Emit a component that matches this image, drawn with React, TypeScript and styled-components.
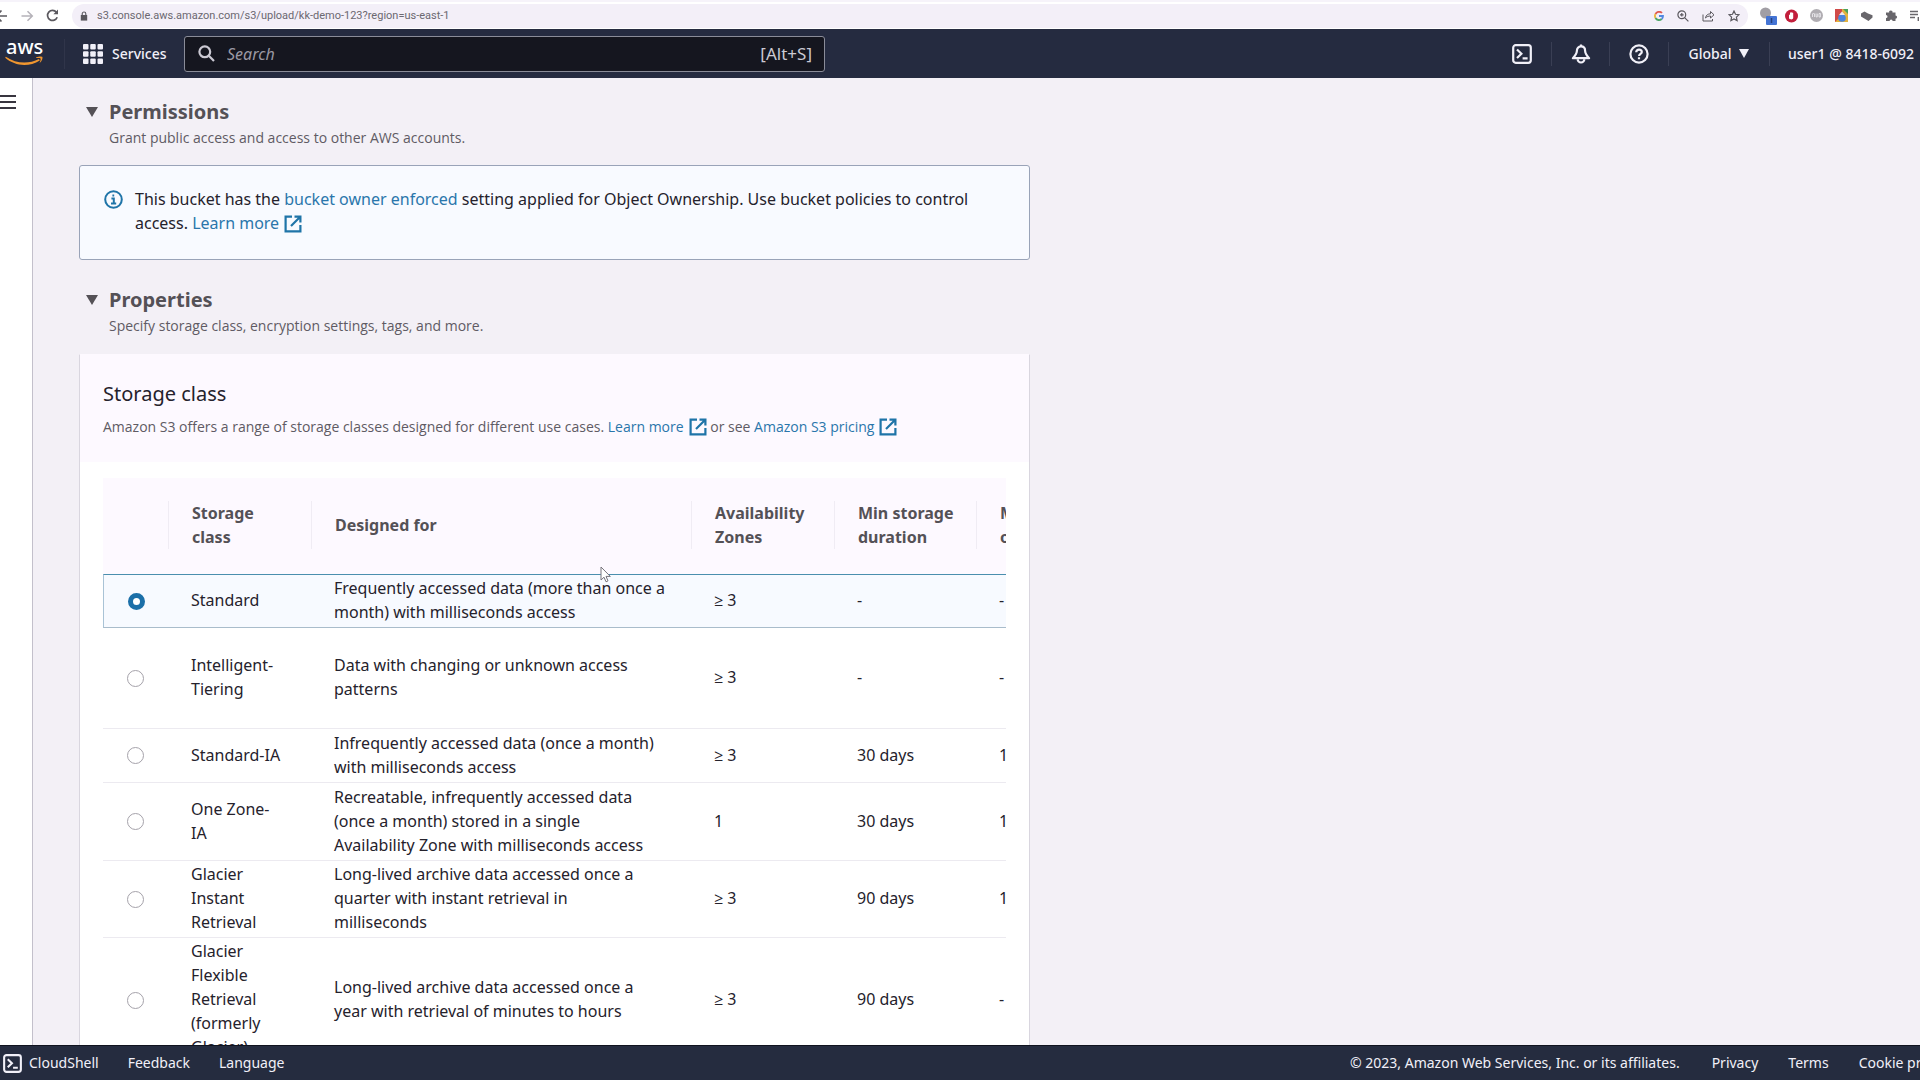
import React, { useState } from 'react';
import styled, { createGlobalStyle } from 'styled-components';

const color = {
  nav: '#252b40',
  navText: '#f1f0f8',
  page: '#f3f0f6',
  heading: '#545156',
  text: '#25222c',
  muted: '#5f5b64',
  link: '#2a76ab',
  icon: '#1f74a8',
  panelHead: '#fdf9ff',
};

const GlobalStyle = createGlobalStyle`
  *, *::before, *::after { box-sizing: border-box; }
  body {
    margin: 0;
    overflow: hidden;
    font-family: 'Noto Sans', 'Open Sans', sans-serif;
    font-size: 16px;
    line-height: 24px;
    color: ${color.text};
  }
  button {
    border: 0;
    padding: 0;
    background: none;
    color: inherit;
    font: inherit;
    cursor: pointer;
  }
  svg { display: block; flex: none; }
`;

const Shell = styled.div`
  display: flex;
  flex-direction: column;
  height: 100vh;
  overflow: hidden;
`;

/* Browser toolbar */

const BrowserBar = styled.div`
  display: flex;
  align-items: center;
  flex: none;
  height: 29px;
  background: #fff;
  border-top: 2px solid #f6f3fa;
  overflow: hidden;
`;

const BrowserButtons = styled.div`
  display: flex;
  align-items: center;
  gap: 12px;
  width: 72px;
  flex: none;
  color: #5a585e;
`;

const AddressBar = styled.label`
  display: flex;
  align-items: center;
  flex: 1;
  height: 24px;
  padding: 0 8px;
  border-radius: 12px;
  background: #f3eff8;
  color: #5a585e;
`;

const AddressInput = styled.input`
  flex: 1;
  margin: 0 0 0 9px;
  padding: 0;
  border: 0;
  outline: 0;
  background: transparent;
  color: #6b6870;
  font: 11px/16px Roboto, sans-serif;
`;

const AddressActions = styled.div`
  display: flex;
  align-items: center;
  gap: 13px;
`;

const Extensions = styled.div`
  display: flex;
  align-items: center;
  gap: 12px;
  width: 172px;
  flex: none;
  padding-left: 12px;
  color: #68666b;
  svg { overflow: visible; }
`;

/* Console navigation */

const NavBar = styled.header`
  display: flex;
  align-items: center;
  flex: none;
  height: 49px;
  background: ${color.nav};
  color: ${color.navText};
  font-size: 14px;
  overflow: hidden;
`;

const LogoLink = styled.a`
  width: 65px;
  padding-left: 5px;
  flex: none;
  border-right: 1px solid #30354a;
`;

const ServicesButton = styled.button`
  display: flex;
  align-items: center;
  gap: 9px;
  width: 119px;
  padding-left: 18px;
  flex: none;
  font-weight: 500;
`;

const SearchBox = styled.label`
  display: flex;
  align-items: center;
  width: 641px;
  height: 36px;
  padding: 0 12px 0 13px;
  border: 1px solid #8a8c98;
  border-radius: 3px;
  background: #15161f;
  color: #cbc9d3;
  font-size: 17px;
`;

const SearchInput = styled.input`
  flex: 1;
  min-width: 0;
  margin-left: 12px;
  padding: 0;
  border: 0;
  outline: 0;
  background: transparent;
  color: #fff;
  font: 16px/24px 'Noto Sans', sans-serif;
  &::placeholder {
    color: #9b99a4;
    font-style: italic;
    opacity: 1;
  }
`;

const NavActions = styled.div`
  display: flex;
  align-items: center;
  margin-left: auto;
`;

const NavItem = styled.button<{ $width: number }>`
  display: flex;
  align-items: center;
  justify-content: center;
  gap: 8px;
  width: ${(p) => p.$width}px;
  height: 24px;
  border-right: 1px solid #3a3f54;
  font-weight: 500;
  white-space: nowrap;
  &:last-child {
    justify-content: flex-start;
    padding-left: 18px;
    border-right: 0;
  }
`;

/* Page body */

const Body = styled.div`
  display: flex;
  flex: 1;
  min-height: 0;
  overflow: hidden;
`;

const SideRail = styled.aside`
  width: 33px;
  flex: none;
  padding-top: 16px;
  background: #fff;
  border-right: 1px solid #c3c0cb;
  button { display: block; }
`;

const Main = styled.main`
  position: relative;
  flex: 1;
  min-width: 0;
  padding: 22px 45px 0 46px;
  background: ${color.page};
`;

const Content = styled.div`
  max-width: 951px;
`;

const SectionHeader = styled.button`
  display: grid;
  grid-template-columns: 30px 1fr;
  row-gap: 4px;
  align-items: center;
  text-align: left;
`;

const Caret = styled.svg`
  margin-left: 7px;
`;

const SectionTitle = styled.span`
  font-size: 20px;
  font-weight: 700;
  line-height: 24px;
  color: ${color.heading};
`;

const SectionText = styled.span`
  grid-column: 2;
  font-family: 'Open Sans', 'Noto Sans', sans-serif;
  font-size: 14px;
  line-height: 20px;
  color: ${color.muted};
`;

const InfoBox = styled.div`
  display: flex;
  gap: 12px;
  margin: 17px 0 28px;
  padding: 21px 24px 24px;
  border: 1px solid #99a3b8;
  border-radius: 3px;
  background: #f8faff;
  & > svg { margin-top: 3px; }
  p { margin: 0; }
`;

const Link = styled.a`
  color: ${color.link};
  text-decoration: none;
  svg {
    display: inline-block;
    margin-left: 5px;
    vertical-align: -4px;
    color: ${color.icon};
  }
`;

const Panel = styled.section`
  margin-top: 18px;
  background: #fff;
  border: 1px solid #d9d6df;
  border-top-color: ${color.panelHead};
`;

const PanelHeader = styled.div`
  padding: 27px 23px 25px;
  background: ${color.panelHead};
`;

const PanelTitle = styled.h2`
  margin: 0 0 11px;
  font-size: 20px;
  font-weight: 400;
  line-height: 24px;
`;

const PanelText = styled.p`
  margin: 0;
  font-family: 'Open Sans', 'Noto Sans', sans-serif;
  font-size: 14px;
  line-height: 20px;
  color: ${color.muted};
`;

const TableScroller = styled.div`
  margin: 16px 23px 0;
  overflow: hidden;
`;

const Table = styled.table`
  width: 1017px;
  table-layout: fixed;
  border-collapse: separate;
  border-spacing: 0;
`;

const HeadCell = styled.th`
  height: 96px;
  padding: 0 0 2px;
  background: ${color.panelHead};
  color: ${color.heading};
  font-weight: 700;
  text-align: left;
  vertical-align: middle;
`;

const HeadLabel = styled.div`
  display: flex;
  align-items: center;
  height: 48px;
  padding: 0 20px 0 23px;
  border-left: 1px solid #f0ecf4;
`;

const Row = styled.tr<{ $selected: boolean; $height: number }>`
  height: ${(p) => p.$height}px;
  td {
    padding: 1px 24px 3px 23px;
    white-space: pre-line;
    vertical-align: middle;
    border-bottom: 1px solid ${(p) => (p.$selected ? '#a9bccb' : '#eceaf0')};
    border-top: ${(p) => (p.$selected ? '1px solid #4a8fae' : '0')};
    background: ${(p) => (p.$selected ? '#f7faff' : '#fff')};
  }
  td:first-child {
    padding: 0;
    border-left: ${(p) => (p.$selected ? '1px solid #a9c3d6' : '0')};
  }
`;

const Radio = styled.input`
  display: block;
  appearance: none;
  width: 17px;
  height: 17px;
  margin: 0 auto;
  border: 1px solid #a5a2aa;
  border-radius: 50%;
  background: #fff;
  &:checked { border: 5px solid #1b6fa8; }
`;

const Pointer = styled.svg`
  position: absolute;
  left: 567px;
  top: 488px;
`;

/* Footer */

const Footer = styled.footer`
  display: flex;
  align-items: center;
  flex: none;
  height: 35px;
  padding-left: 3px;
  border-top: 1px solid #10131f;
  background: #252c3f;
  color: ${color.navText};
  font-size: 14px;
  white-space: nowrap;
  overflow: hidden;
`;

const FooterGroup = styled.div`
  display: flex;
  align-items: center;
  gap: 29px;
`;

const FooterButton = styled.button`
  display: flex;
  align-items: center;
  gap: 7px;
`;

const Legal = styled.div`
  display: flex;
  gap: 30px;
  width: 570px;
  margin-left: auto;
  a { color: inherit; text-decoration: none; }
  span { margin-right: 2px; }
`;

/* Icons */

const ExternalIcon = () => (
  <svg width="18" height="18" viewBox="0 0 18 18" fill="none" stroke="currentColor" strokeWidth="2.2">
    <path d="M8 1.6H1.6v14.8h14.8V10" />
    <path d="M10.5 1.6h5.9v5.9M16 2 7 11" />
  </svg>
);

const InfoIcon = () => (
  <svg width="19" height="19" viewBox="0 0 19 19" fill="none" stroke={color.icon} strokeWidth="2">
    <circle cx="9.5" cy="9.5" r="8.3" />
    <path d="M7.4 8.6h2.4v4.6M7 13.6h5.2M8.4 5.4h1.8" />
  </svg>
);

const TerminalIcon = ({ size = 20 }: { size?: number }) => (
  <svg width={size} height={size} viewBox="0 0 20 20" fill="none" stroke="currentColor" strokeWidth="2.200">
    <rect x="1.200" y="1.200" width="17.600" height="17.600" rx="2.5" />
    <path d="m5 5.5 4.400 4.300L5 14M10.600 14.400h5" />
  </svg>
);

const BellIcon = () => (
  <svg width="20" height="20" viewBox="0 0 20 20" fill="none" stroke="currentColor" strokeWidth="2.200" strokeLinejoin="round">
    <path d="M10 2.400c-2.600 0-4.100 1.900-4.100 4.400 0 2.700-1.300 4.500-4 7.400h16.200c-2.700-2.900-4-4.700-4-7.400 0-2.500-1.500-4.400-4.100-4.400Z" />
    <path d="M10 .4v2M6.700 15.200a3.300 3.300 0 0 0 6.600 0" />
  </svg>
);

const HelpIcon = () => (
  <svg width="20" height="20" viewBox="0 0 20 20" fill="none" stroke="currentColor" strokeWidth="2.200">
    <circle cx="10" cy="10" r="8.600" />
    <path d="M7.200 8.300c0-1.700 1.200-2.700 2.800-2.700s2.800 1 2.800 2.400c0 1.900-2.700 2-2.700 4M10 13.300v1.900" />
  </svg>
);

const GridIcon = () => (
  <svg width="20" height="20" viewBox="0 0 20 20" fill="currentColor">
    {[0, 7.25, 14.5].map((y) => [0, 7.25, 14.5].map((x) => <rect key={`${x}-${y}`} x={x} y={y} width="5.5" height="5.5" rx="1" />))}
  </svg>
);

const SearchIcon = () => (
  <svg width="17" height="17" viewBox="0 0 17 17" fill="none" stroke="currentColor" strokeWidth="2.200">
    <circle cx="6.800" cy="6.800" r="5.400" />
    <path d="m10.800 10.800 5.200 5.200" />
  </svg>
);

const AwsLogo = () => (
  <svg width="40" height="30" viewBox="0 0 40 30" role="img" aria-label="AWS">
    <text x="1" y="15" fill="#fff" fontFamily="Noto Sans, sans-serif" fontSize="20" fontWeight="500">aws</text>
    <path d="M.8 17.800c10.600 7.200 23 7.400 33.200 2.200l.8 1.400C24 28.200 10 27.400.2 18.800Z" fill="#f0962f" />
    <path d="M31 18.400c3-1.200 6-1.200 6.400-.4.500 1-.4 4.300-2.900 6.200.8-2.100 1.500-4 1-4.700-.4-.6-2.400-.6-4.500-.4Z" fill="#f0962f" />
  </svg>
);

const BackIcon = () => (
  <svg width="8" height="14" viewBox="6 0 8 14" fill="none" stroke="currentColor" strokeWidth="1.600">
    <path d="M13 7H2M7.500 1.500 2 7l5.500 5.500" />
  </svg>
);

const ForwardIcon = () => (
  <svg width="14" height="14" viewBox="0 0 14 14" fill="none" stroke="#b5b2b9" strokeWidth="1.500">
    <path d="M1.500 7h11M7.500 2.200 12.300 7l-4.800 4.800" />
  </svg>
);

const ReloadIcon = () => (
  <svg width="13" height="13" viewBox="0 0 13 13" fill="none" stroke="currentColor" strokeWidth="1.700">
    <path d="M11.200 8.200a5 5 0 1 1-.8-5" />
    <path d="M12 .6v4.600H7.400Z" fill="currentColor" stroke="none" />
  </svg>
);

const LockIcon = () => (
  <svg width="8" height="10" viewBox="0 0 8 10" fill="currentColor">
    <path d="M.8 4h6.400v5.600H.8Z" />
    <path d="M2.200 4.500V2.800a1.800 1.800 0 0 1 3.600 0v1.700" fill="none" stroke="currentColor" strokeWidth="1.100" />
  </svg>
);

const GoogleIcon = () => (
  <svg width="10" height="10" viewBox="0 0 10 10" fill="none" strokeWidth="1.800">
    <path d="M8 2A4 4 0 0 0 1.500 3" stroke="#df5a50" />
    <path d="M1.500 3a4 4 0 0 0 0 4" stroke="#ecb53c" />
    <path d="M1.500 7A4 4 0 0 0 7.700 8" stroke="#4ba665" />
    <path d="M7.700 8A4 4 0 0 0 9 5H5" stroke="#5288e0" />
  </svg>
);

const ZoomIcon = () => (
  <svg width="12" height="12" viewBox="0 0 12 12" fill="none" stroke="currentColor" strokeWidth="1.200">
    <circle cx="4.800" cy="4.800" r="3.900" />
    <path d="m7.600 7.600 3.800 3.800M3 4.800h3.600M4.800 3v3.600" />
  </svg>
);

const ShareIcon = () => (
  <svg width="13" height="12" viewBox="0 0 13 12" fill="none" stroke="currentColor" strokeWidth="1">
    <path d="M1 4.500V11h9.500V9" />
    <path d="M3.500 8C4 5 6 3.800 8.500 3.800V1.500L12 4.800 8.500 8V6C6.500 6 5 6.500 3.500 8Z" />
  </svg>
);

const StarIcon = () => (
  <svg width="12" height="12" viewBox="0 0 12 12" fill="none" stroke="currentColor" strokeWidth="1.200">
    <path d="m6 1 1.500 3.300 3.500.4-2.600 2.400.7 3.500L6 8.900l-3.100 1.700.7-3.500L1 4.700l3.500-.4Z" />
  </svg>
);

const ProfileExtIcon = () => (
  <svg width="13" height="18" viewBox="0 0 13 18">
    <circle cx="5.500" cy="6" r="5.500" fill="#a19ea4" />
    <rect x="6" y="9" width="11" height="9" rx="1" fill="#4474d4" />
    <path d="M11.500 11v5" stroke="#24407e" strokeWidth="1.500" />
  </svg>
);

const BlockerIcon = () => (
  <svg width="13" height="14" viewBox="0 0 13 14">
    <circle cx="6.500" cy="7" r="6.500" fill="#c21f3c" />
    <path d="M4 6.200c0-1 1-1 1 0V4c0-.9 1-.9 1 0 0-1 1.200-1 1.200 0 0-.8 1-.7 1 .2V9c0 1.700-3.500 1.900-4.200.2Z" fill="#fff" />
  </svg>
);

const GreyBadgeIcon = () => (
  <svg width="13" height="13" viewBox="0 0 13 13">
    <circle cx="6.500" cy="6.500" r="6.500" fill="#b0adb2" />
    <path d="M2.500 8V5l1-1 1 1v3M6 4.500v3.400h1.300V4.600M9 4.500h1.400V8H9Z" fill="none" stroke="#f3f1f5" strokeWidth=".8" />
  </svg>
);

const MapIcon = () => (
  <svg width="13" height="13" viewBox="0 0 13 13">
    <rect width="13" height="13" fill="#e3b23f" />
    <path d="M0 0h7v6L0 13Z" fill="#d04a49" />
    <path d="M8 0h5v5Z" fill="#4ca35c" />
    <circle cx="7" cy="9" r="3.800" fill="#4b85dd" />
    <path d="M7 2.500 10 6H4Z" fill="#f1e9ea" />
  </svg>
);

const BoxesIcon = () => (
  <svg width="13" height="12" viewBox="0 0 13 12" fill="currentColor">
    <path d="M1 3.500 4.500 1.500 8 3.500l4.500 1.800v2.200L8.500 11 6 9.500 1 6.500Z" />
  </svg>
);

const PuzzleIcon = () => (
  <svg width="13" height="13" viewBox="0 0 13 13" fill="currentColor">
    <path d="M1 3.500h3.200a1.700 1.700 0 1 1 3.300 0h3v3a1.600 1.600 0 1 1 0 3.200V12H7.600a1.500 1.500 0 0 0-3 0H1V9a1.500 1.500 0 0 0 0-3Z" />
  </svg>
);

const PlaylistIcon = () => (
  <svg width="9" height="12" viewBox="0 0 9 12" fill="none" stroke="currentColor" strokeWidth="1.400">
    <path d="M0 1.500h8M0 4.500h8M0 7.500h5M8.300 7v4" />
  </svg>
);

/* Storage class data */

type StorageClass = {
  name: string;
  use: string;
  zones: string;
  duration: string;
  size: string;
  height: number;
};

const classes: StorageClass[] = [
  { name: 'Standard', use: 'Frequently accessed data (more than once a month) with milliseconds access', zones: '≥ 3', duration: '-', size: '-', height: 54 },
  { name: 'Intelligent-Tiering', use: 'Data with changing or unknown access patterns', zones: '≥ 3', duration: '-', size: '-', height: 101 },
  { name: 'Standard-IA', use: 'Infrequently accessed data (once a month) with milliseconds access', zones: '≥ 3', duration: '30 days', size: '128 KB', height: 54 },
  { name: 'One Zone-\nIA', use: 'Recreatable, infrequently accessed data (once a month) stored in a single\nAvailability Zone with milliseconds access', zones: '1', duration: '30 days', size: '128 KB', height: 78 },
  { name: 'Glacier Instant Retrieval', use: 'Long-lived archive data accessed once a quarter with instant retrieval in\nmilliseconds', zones: '≥ 3', duration: '90 days', size: '128 KB', height: 77 },
  { name: 'Glacier Flexible Retrieval (formerly Glacier)', use: 'Long-lived archive data accessed once a year with retrieval of minutes to hours', zones: '≥ 3', duration: '90 days', size: '-', height: 124 },
];

const columns = ['Storage class', 'Designed for', 'Availability Zones', 'Min storage duration', 'Min billable object size'];

const Section = ({ title, text }: { title: string; text: string }) => (
  <SectionHeader type="button" aria-expanded="true">
    <Caret width="12" height="10" viewBox="0 0 12 10" fill={color.heading}>
      <path d="M0 0h12L6 10Z" />
    </Caret>
    <SectionTitle>{title}</SectionTitle>
    <SectionText>{text}</SectionText>
  </SectionHeader>
);

export default function App() {
  const [selected, setSelected] = useState('Standard');

  return (
    <Shell>
      <GlobalStyle />
      <BrowserBar>
        <BrowserButtons>
          <button type="button" aria-label="Back"><BackIcon /></button>
          <button type="button" aria-label="Forward"><ForwardIcon /></button>
          <button type="button" aria-label="Reload"><ReloadIcon /></button>
        </BrowserButtons>
        <AddressBar>
          <LockIcon />
          <AddressInput aria-label="Address" defaultValue="s3.console.aws.amazon.com/s3/upload/kk-demo-123?region=us-east-1" />
          <AddressActions>
            <GoogleIcon />
            <ZoomIcon />
            <ShareIcon />
            <StarIcon />
          </AddressActions>
        </AddressBar>
        <Extensions>
          <ProfileExtIcon />
          <BlockerIcon />
          <GreyBadgeIcon />
          <MapIcon />
          <BoxesIcon />
          <PuzzleIcon />
          <PlaylistIcon />
        </Extensions>
      </BrowserBar>

      <NavBar>
        <LogoLink href="#home"><AwsLogo /></LogoLink>
        <ServicesButton type="button"><GridIcon />Services</ServicesButton>
        <SearchBox>
          <SearchIcon />
          <SearchInput type="text" placeholder="Search" aria-label="Search" />
          [Alt+S]
        </SearchBox>
        <NavActions>
          <NavItem type="button" $width={59} aria-label="CloudShell"><TerminalIcon /></NavItem>
          <NavItem type="button" $width={58} aria-label="Notifications"><BellIcon /></NavItem>
          <NavItem type="button" $width={59} aria-label="Help"><HelpIcon /></NavItem>
          <NavItem type="button" $width={101}>
            Global
            <svg width="10" height="9" viewBox="0 0 10 9" fill="currentColor"><path d="M0 0h10L5 9Z" /></svg>
          </NavItem>
          <NavItem type="button" $width={150}>user1 @ 8418-6092</NavItem>
        </NavActions>
      </NavBar>

      <Body>
        <SideRail>
          <button type="button" aria-label="Open navigation">
            <svg width="16" height="16" viewBox="0 0 16 16" stroke="#38353f" strokeWidth="2">
              <path d="M0 2h16M0 8h16M0 14h16" />
            </svg>
          </button>
        </SideRail>
        <Main>
          <Content>
            <Section title="Permissions" text="Grant public access and access to other AWS accounts." />
            <InfoBox>
              <InfoIcon />
              <p>
                This bucket has the <Link href="#ownership">bucket owner enforced</Link> setting applied for Object Ownership. Use bucket policies to control access.{' '}
                <Link href="#learn">Learn more<ExternalIcon /></Link>
              </p>
            </InfoBox>
            <Section title="Properties" text="Specify storage class, encryption settings, tags, and more." />
            <Panel>
              <PanelHeader>
                <PanelTitle>Storage class</PanelTitle>
                <PanelText>
                  Amazon S3 offers a range of storage classes designed for different use cases.{' '}
                  <Link href="#classes">Learn more<ExternalIcon /></Link> or see{' '}
                  <Link href="#pricing">Amazon S3 pricing<ExternalIcon /></Link>
                </PanelText>
              </PanelHeader>
              <TableScroller>
                <Table>
                  <colgroup>
                    <col width="65" />
                    <col width="143" />
                    <col width="380" />
                    <col width="143" />
                    <col width="142" />
                    <col width="144" />
                  </colgroup>
                  <thead>
                    <tr>
                      <HeadCell aria-label="Selection" />
                      {columns.map((label) => (
                        <HeadCell key={label} scope="col"><HeadLabel>{label}</HeadLabel></HeadCell>
                      ))}
                    </tr>
                  </thead>
                  <tbody>
                    {classes.map((c) => (
                      <Row key={c.name} $selected={c.name === selected} $height={c.height}>
                        <td>
                          <Radio
                            type="radio"
                            name="storage-class"
                            aria-label={c.name}
                            checked={c.name === selected}
                            onChange={() => setSelected(c.name)}
                          />
                        </td>
                        <td>{c.name}</td>
                        <td>{c.use}</td>
                        <td>{c.zones}</td>
                        <td>{c.duration}</td>
                        <td>{c.size}</td>
                      </Row>
                    ))}
                  </tbody>
                </Table>
              </TableScroller>
            </Panel>
          </Content>
          <Pointer width="12" height="17" viewBox="0 0 12 17" fill="#fff" stroke="#77747c" strokeWidth="1">
            <path d="M1 1v13l3-2.800 2 4.600 2-.9-2-4.500h4.300Z" />
          </Pointer>
        </Main>
      </Body>

      <Footer>
        <FooterGroup>
          <FooterButton type="button"><TerminalIcon size={19} />CloudShell</FooterButton>
          <FooterButton type="button">Feedback</FooterButton>
          <FooterButton type="button">Language</FooterButton>
        </FooterGroup>
        <Legal>
          <span>© 2023, Amazon Web Services, Inc. or its affiliates.</span>
          <a href="#privacy">Privacy</a>
          <a href="#terms">Terms</a>
          <a href="#cookies">Cookie preferences</a>
        </Legal>
      </Footer>
    </Shell>
  );
}
